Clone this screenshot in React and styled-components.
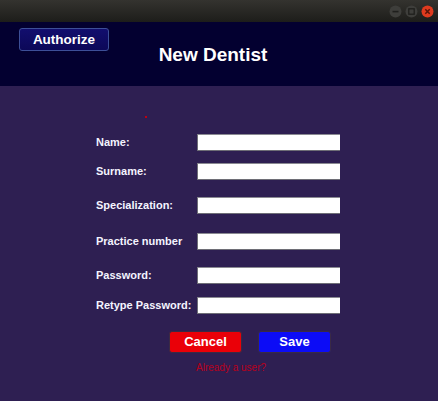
import React from "react";
import styled, { createGlobalStyle } from "styled-components";

const Global = createGlobalStyle`
  html, body { margin: 0; padding: 0; background: #2e1f52; }
  body { font-family: "Liberation Sans", Arial, sans-serif; }
  * { box-sizing: border-box; }
`;

const Window = styled.div`
  width: 438px;
  height: 401px;
  display: flex;
  flex-direction: column;
  background: #2e1f52;
  overflow: hidden;
`;

const TitleBar = styled.div`
  height: 22px;
  flex: none;
  display: flex;
  align-items: center;
  justify-content: flex-end;
  gap: 3px;
  padding-right: 4px;
  background: linear-gradient(#34332f, #1d1d1a);
`;

const WinButton = styled.svg`
  width: 13px;
  height: 13px;
  display: block;
`;

const Header = styled.div`
  height: 64px;
  flex: none;
  display: grid;
  grid-template-columns: 1fr auto 1fr;
  align-items: start;
  background: #030030;
`;

const AuthorizeButton = styled.button`
  justify-self: start;
  margin: 6px 0 0 19px;
  width: 90px;
  height: 23px;
  padding: 0;
  border: 1px solid #3d4f98;
  border-radius: 3px;
  background: linear-gradient(#120e6e, #0c0858);
  color: #ffffff;
  font-family: "Liberation Sans", Arial, sans-serif;
  font-weight: bold;
  font-size: 13.5px;
  line-height: 21px;
  text-align: center;
`;

const Title = styled.h1`
  grid-column: 2;
  margin: 22px 12px 0 0;
  font-family: "Liberation Sans", Arial, sans-serif;
  font-weight: bold;
  font-size: 19px;
  line-height: 22px;
  color: #ffffff;
`;

const Body = styled.div`
  flex: 1;
  display: flex;
  flex-direction: column;
  padding-top: 30px;
`;

const ErrorMark = styled.span`
  display: block;
  width: 2px;
  height: 2px;
  margin-left: 145px;
  background: #c00010;
`;

const Form = styled.div`
  display: grid;
  grid-template-columns: 101px 143px;
  margin: 16px 0 0 96px;
`;

const Label = styled.label`
  grid-column: 1;
  margin-top: ${(p) => p.$gap}px;
  align-self: center;
  font-family: "Liberation Sans", Arial, sans-serif;
  font-weight: bold;
  font-size: 11px;
  line-height: 13px;
  color: #f4f4ff;
  white-space: nowrap;
`;

const Input = styled.input`
  grid-column: 2;
  margin-top: ${(p) => p.$gap}px;
  height: 17px;
  width: 143px;
  padding: 0 3px;
  border: none;
  border-top: 1px solid #8a8a92;
  border-left: 1px solid #6e6e76;
  border-bottom: 1px solid #6e6e76;
  background: #ffffff;
  outline: none;
`;

const Actions = styled.div`
  display: flex;
  gap: 16px;
  margin: 17px 0 0 169px;
`;

const ActionButton = styled.button`
  width: 73px;
  height: 22px;
  padding: 0;
  border: 1px solid #3a2a44;
  border-radius: 3px;
  background: ${(p) => p.$bg};
  color: #ffffff;
  font-family: "Liberation Sans", Arial, sans-serif;
  font-weight: bold;
  font-size: 13px;
  line-height: 20px;
  text-align: center;
`;

const LoginLink = styled.div`
  margin: 9px 0 0 196px;
  font-family: "Liberation Sans", Arial, sans-serif;
  font-size: 10px;
  line-height: 12px;
  color: #b8001c;
`;

const fields = [
  { label: "Name:", gap: 0 },
  { label: "Surname:", gap: 12 },
  { label: "Specialization:", gap: 17 },
  { label: "Practice number", gap: 19 },
  { label: "Password:", gap: 17, type: "password" },
  { label: "Retype Password:", gap: 13, type: "password" },
];

export default function App() {
  return (
    <>
      <Global />
      <Window>
        <TitleBar>
          <WinButton viewBox="0 0 13 13">
            <circle cx="6.5" cy="6.5" r="6" fill="#3e3e3b" />
            <rect x="3.5" y="5.8" width="6" height="1.6" fill="#1f1f1d" />
          </WinButton>
          <WinButton viewBox="0 0 13 13">
            <circle cx="6.5" cy="6.5" r="6" fill="#3e3e3b" />
            <rect x="3.8" y="3.8" width="5.4" height="5.4" fill="none" stroke="#1f1f1d" strokeWidth="1.3" />
          </WinButton>
          <WinButton viewBox="0 0 13 13">
            <circle cx="6.5" cy="6.5" r="6" fill="#df3a1e" />
            <path d="M4.3 4.3 L8.7 8.7 M8.7 4.3 L4.3 8.7" stroke="#5a1408" strokeWidth="1.5" />
          </WinButton>
        </TitleBar>
        <Header>
          <AuthorizeButton>Authorize</AuthorizeButton>
          <Title>New Dentist</Title>
        </Header>
        <Body>
          <ErrorMark />
          <Form>
            {fields.map((f) => (
              <React.Fragment key={f.label}>
                <Label $gap={f.gap}>{f.label}</Label>
                <Input $gap={f.gap} type={f.type || "text"} />
              </React.Fragment>
            ))}
          </Form>
          <Actions>
            <ActionButton $bg="#ea0008">Cancel</ActionButton>
            <ActionButton $bg="#0c0cf6">Save</ActionButton>
          </Actions>
          <LoginLink>Already a user?</LoginLink>
        </Body>
      </Window>
    </>
  );
}
